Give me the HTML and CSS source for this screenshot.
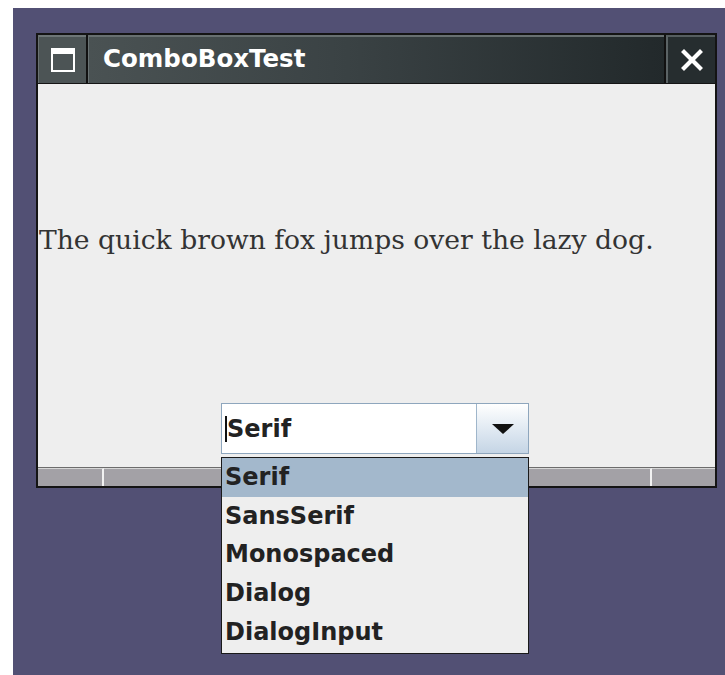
FILE: index.html
```html
<!DOCTYPE html>
<html>
<head>
<meta charset="utf-8">
<title>ComboBoxTest</title>
<link rel="stylesheet" href="styles.css">
</head>
<body>
<div class="desktop">
  <div class="window">
    <div class="titlebar">
      <div class="tb-icon">
        <svg width="24" height="24" viewBox="0 0 24 24">
          <rect x="1" y="1" width="22" height="22" fill="none" stroke="#fff" stroke-width="2"/>
          <rect x="1" y="1" width="22" height="5" fill="#fff"/>
        </svg>
      </div>
      <div class="tb-title">ComboBoxTest</div>
      <div class="tb-close">
        <svg width="22" height="22" viewBox="0 0 22 22">
          <path d="M3 3 L19 19 M19 3 L3 19" stroke="#fff" stroke-width="4.2" stroke-linecap="square"/>
        </svg>
      </div>
    </div>
    <div class="content">
      <div class="label-area"><span class="sample">The quick brown fox jumps over the lazy dog.</span></div>
      <div class="combo-row">
        <div class="combo">
          <div class="combo-field"><span class="caret"></span>Serif</div>
          <div class="combo-btn">
            <svg width="22" height="10" viewBox="0 0 22 10"><path d="M0 0 H22 L11 10 Z" fill="#111"/></svg>
          </div>
        </div>
      </div>
    </div>
    <div class="statusbar">
      <div class="seg seg-left"></div>
      <div class="seg seg-mid"></div>
      <div class="seg seg-right"></div>
    </div>
  </div>
  <ul class="popup">
    <li class="item selected">Serif</li>
    <li class="item">SansSerif</li>
    <li class="item">Monospaced</li>
    <li class="item">Dialog</li>
    <li class="item">DialogInput</li>
  </ul>
</div>
</body>
</html>
```

FILE: styles.css
```css
html, body {
  margin: 0;
  padding: 0;
  background: #ffffff;
}

.desktop {
  position: relative;
  margin: 8px 0 0 13px;
  height: 667px;
  background: #525074;
  padding: 25px 0 0 23px;
  box-sizing: border-box;
  overflow: hidden;
}

.window {
  width: 681px;
  border: 2px solid #141414;
  box-sizing: border-box;
  display: flex;
  flex-direction: column;
  background: #eeeeee;
}

/* title bar */
.titlebar {
  height: 49px;
  display: flex;
  background: #111;
  border-bottom: 1px solid #151515;
  box-sizing: border-box;
}

.tb-icon {
  width: 48px;
  background: #4c5455;
  border-top: 2px solid #6e7677;
  border-left: 1px solid #6a7273;
  box-sizing: border-box;
  display: flex;
  align-items: center;
  justify-content: center;
  margin-right: 2px;
}

.tb-title {
  flex: 1;
  background: linear-gradient(to right, #4a5253 0%, #3a4244 45%, #22292b 100%);
  border-top: 2px solid #687071;
  border-left: 1px solid #6a7273;
  box-sizing: border-box;
  color: #ffffff;
  font-family: "DejaVu Sans", sans-serif;
  font-weight: bold;
  font-size: 24.5px;
  letter-spacing: 0;
  padding: 0 0 3px 14px;
  display: flex;
  align-items: center;
}

.tb-close {
  width: 49px;
  margin-left: 2px;
  background: #262d2f;
  border-top: 2px solid #565e60;
  border-left: 2px solid #5b6365;
  box-sizing: border-box;
  display: flex;
  align-items: center;
  justify-content: center;
}

/* content pane */
.content {
  height: 383px;
  display: flex;
  flex-direction: column;
}

.label-area {
  flex: 1;
  display: flex;
  align-items: center;
  padding: 0 0 8px 1px;
}

.sample {
  font-family: "DejaVu Serif", serif;
  font-size: 26.6px;
  color: #333333;
  white-space: nowrap;
}

.combo-row {
  display: flex;
  justify-content: center;
  padding: 0 0 13px 0;
}

.combo {
  width: 308px;
  height: 51px;
  display: flex;
  border: 1px solid #8ea6bd;
  box-sizing: border-box;
  margin-left: -3px;
}

.combo-field {
  flex: 1;
  background: #ffffff;
  border-right: 1px solid #9fb6cb;
  display: flex;
  align-items: center;
  padding-left: 3px;
  font-family: "DejaVu Sans", sans-serif;
  font-weight: bold;
  font-size: 24px;
  color: #222;
}

.caret {
  width: 2px;
  height: 26px;
  background: #111;
  flex: none;
}

.combo-btn {
  width: 51px;
  background: linear-gradient(to bottom, #ffffff 0%, #e4ecf4 45%, #c5d5e5 100%);
  display: flex;
  align-items: center;
  justify-content: center;
}

/* bottom strip */
.statusbar {
  height: 19px;
  display: flex;
  background: #a3a1a6;
  border-top: 1px solid #6c6c6c;
  box-sizing: border-box;
}

.seg {
  border-top: 1px solid #d6d6d6;
}

.seg-left {
  width: 64px;
  border-right: 2px solid #f2f2f2;
}

.seg-mid {
  flex: 1;
  border-right: 2px solid #f2f2f2;
}

.seg-right {
  width: 63px;
}

/* drop-down list */
.popup {
  position: absolute;
  left: 208px;
  top: 449px;
  width: 308px;
  margin: 0;
  padding: 0 0 2px 0;
  list-style: none;
  background: #eeeeee;
  border: 1px solid #1a1a1a;
  box-sizing: border-box;
}

.item {
  height: 38.6px;
  display: flex;
  align-items: center;
  padding-left: 3px;
  font-family: "DejaVu Sans", sans-serif;
  font-weight: bold;
  font-size: 24px;
  color: #222;
}

.item.selected {
  background: #a3b8cc;
}
```
